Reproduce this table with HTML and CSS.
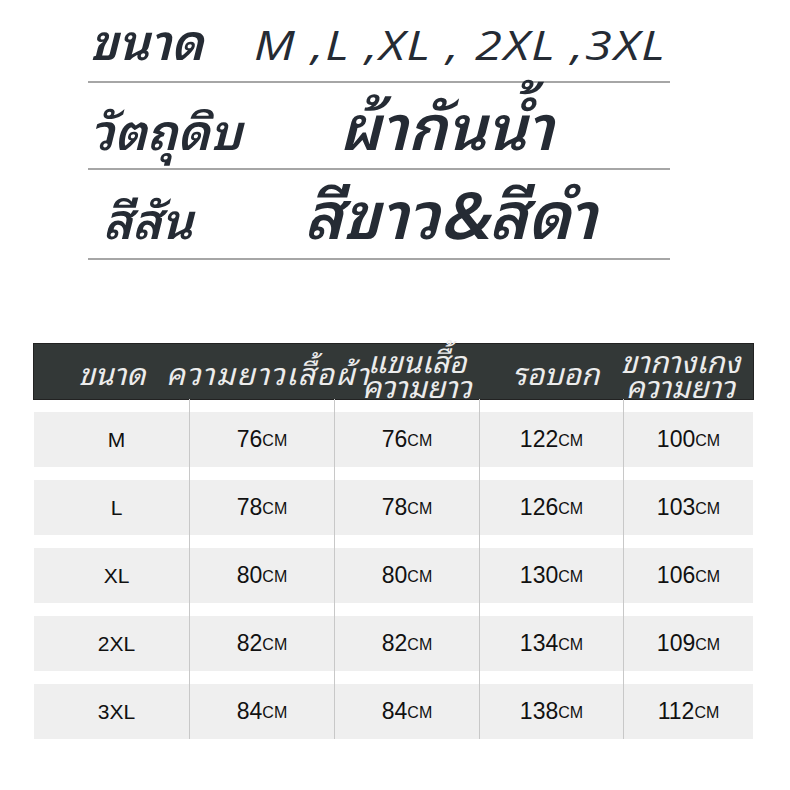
FILE: index.html
```html
<!DOCTYPE html>
<html lang="th">
<head>
<meta charset="utf-8">
<title>Size chart</title>
<link rel="stylesheet" href="styles.css">
</head>
<body>
<div class="page">
  <section class="spec">
    <div class="spec-row row-size">
      <span class="spec-label">ขนาด</span>
      <span class="spec-value val-size">M ,L ,XL , 2XL ,3XL</span>
    </div>
    <div class="spec-row row-mat">
      <span class="spec-label">วัตถุดิบ</span>
      <span class="spec-value val-mat">ผ้ากันน้ำ</span>
    </div>
    <div class="spec-row row-col">
      <span class="spec-label lab-col">สีสัน</span>
      <span class="spec-value val-col">สีขาว&amp;สีดำ</span>
    </div>
  </section>

  <section class="chart">
    <div class="chart-head">
      <div class="hc hc1">ขนาด</div>
      <div class="hc hc2">ความยาวเสื้อผ้า</div>
      <div class="hc hc3"><span class="hl">แขนเสื้อ</span><span class="hl">ความยาว</span></div>
      <div class="hc hc4">รอบอก</div>
      <div class="hc hc5"><span class="hl">ขากางเกง</span><span class="hl">ความยาว</span></div>
    </div>
    <div class="chart-body">
      <div class="crow">
        <div class="cell c1"><div class="fill">M</div></div>
        <div class="cell c2"><div class="fill">76<small>CM</small></div></div>
        <div class="cell c3"><div class="fill">76<small>CM</small></div></div>
        <div class="cell c4"><div class="fill">122<small>CM</small></div></div>
        <div class="cell c5"><div class="fill">100<small>CM</small></div></div>
      </div>
      <div class="crow">
        <div class="cell c1"><div class="fill">L</div></div>
        <div class="cell c2"><div class="fill">78<small>CM</small></div></div>
        <div class="cell c3"><div class="fill">78<small>CM</small></div></div>
        <div class="cell c4"><div class="fill">126<small>CM</small></div></div>
        <div class="cell c5"><div class="fill">103<small>CM</small></div></div>
      </div>
      <div class="crow">
        <div class="cell c1"><div class="fill">XL</div></div>
        <div class="cell c2"><div class="fill">80<small>CM</small></div></div>
        <div class="cell c3"><div class="fill">80<small>CM</small></div></div>
        <div class="cell c4"><div class="fill">130<small>CM</small></div></div>
        <div class="cell c5"><div class="fill">106<small>CM</small></div></div>
      </div>
      <div class="crow">
        <div class="cell c1"><div class="fill">2XL</div></div>
        <div class="cell c2"><div class="fill">82<small>CM</small></div></div>
        <div class="cell c3"><div class="fill">82<small>CM</small></div></div>
        <div class="cell c4"><div class="fill">134<small>CM</small></div></div>
        <div class="cell c5"><div class="fill">109<small>CM</small></div></div>
      </div>
      <div class="crow">
        <div class="cell c1"><div class="fill">3XL</div></div>
        <div class="cell c2"><div class="fill">84<small>CM</small></div></div>
        <div class="cell c3"><div class="fill">84<small>CM</small></div></div>
        <div class="cell c4"><div class="fill">138<small>CM</small></div></div>
        <div class="cell c5"><div class="fill">112<small>CM</small></div></div>
      </div>
    </div>
  </section>
</div>
</body>
</html>
```

FILE: styles.css
```css
html, body {
  margin: 0;
  padding: 0;
  background: #ffffff;
}

.page {
  width: 790px;
  height: 790px;
  overflow: hidden;
}

.spec {
  margin-left: 88px;
  width: 582px;
  color: #252b34;
  font-family: "Noto Sans Thai Looped", "Noto Sans Thai", "Loma", "Garuda", "Tlwg Typo", "Liberation Sans", sans-serif;
  font-style: italic;
}

.spec-row {
  display: flex;
  align-items: baseline;
  border-bottom: 2px solid #a6a6a6;
  box-sizing: border-box;
  white-space: nowrap;
}

.row-size { height: 83px; padding-top: 10px; }
.row-mat  { height: 87px; padding-top: 11px; }
.row-col  { height: 90px; padding-top: 12px; }

.spec-label {
  font-size: 49px;
  font-weight: 600;
  line-height: 56px;
  margin-left: 2px;
}

.lab-col { margin-left: 15px; }

.spec-value {
  line-height: 56px;
}

.val-size {
  display: inline-block;
  font-family: "Open Sans", "Liberation Sans", sans-serif;
  font-size: 41px;
  font-weight: 500;
  margin-left: 50px;
  letter-spacing: 1.6px;
  transform: scaleX(1.19);
  transform-origin: left center;
}

.val-mat {
  font-size: 62px;
  font-weight: 600;
  margin-left: 97px;
}

.val-col {
  font-size: 65px;
  font-weight: 600;
  margin-left: 111px;
}

.chart {
  margin: 84px 0 0 34px;
  width: 719px;
}

.chart-head {
  display: flex;
  height: 55px;
  background: #333837;
  color: #ececec;
  font-family: "Noto Sans Thai Looped", "Noto Sans Thai", "Loma", "Garuda", "Liberation Sans", sans-serif;
  font-style: italic;
  font-size: 30px;
  align-items: center;
  box-shadow: 0 0 0 1px #222;
}

.hc {
  text-align: center;
  white-space: nowrap;
  line-height: 30px;
  box-sizing: border-box;
}

.hc2 {
  letter-spacing: 1.5px;
}

.hc3, .hc5 {
  display: flex;
  flex-direction: column;
  align-items: center;
}

.hl {
  display: block;
  line-height: 25px;
  height: 25px;
}

.hc1 { width: 132px; padding-left: 24px; }
.hc2 { width: 196px; }
.hc3 { width: 110px; }
.hc4 { width: 150px; padding-left: 18px; }
.hc5 { width: 131px; padding-right: 14px; }

.crow {
  display: flex;
}

.cell {
  padding-top: 13px;
  border-left: 1px solid #c8c8c8;
  box-sizing: border-box;
}

.c1 { width: 155px; border-left: none; }
.c2 { width: 145px; }
.c3 { width: 145px; }
.c4 { width: 144px; }
.c5 { width: 130px; }

.fill {
  height: 55px;
  background: #efefef;
  display: flex;
  align-items: center;
  justify-content: center;
  font-family: "Liberation Sans", Arial, sans-serif;
  font-size: 23px;
  color: #111111;
}

.c1 .fill {
  padding-left: 10px;
  font-size: 21px;
}

.fill small {
  font-size: 16px;
  margin-top: 3px;
}
```
